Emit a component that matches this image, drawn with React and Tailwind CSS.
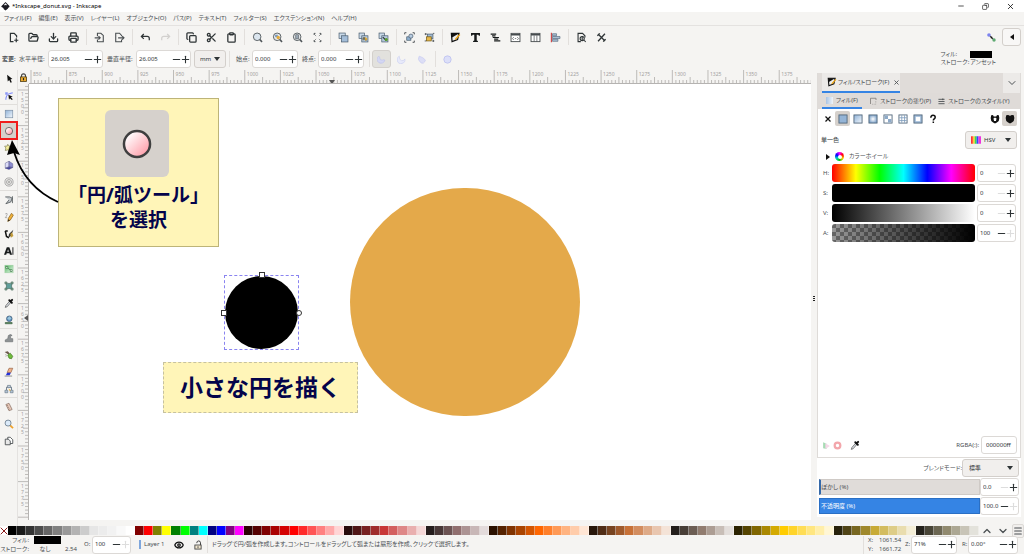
// src/App.jsx
import { useState } from "react";
import {
  ChevronDown,
  ChevronUp,
  Clipboard,
  Copy,
  Download,
  Eye,
  FolderOpen,
  Menu,
  Minus,
  Plus,
  Printer,
  Scissors,
  X,
} from "lucide-react";

const MENUS = [
  "ファイル(F)",
  "編集(E)",
  "表示(V)",
  "レイヤー(L)",
  "オブジェクト(O)",
  "パス(P)",
  "テキスト(T)",
  "フィルター(S)",
  "エクステンション(N)",
  "ヘルプ(H)",
];

const PALETTE = (
  "000000 1a1a1a 333333 4d4d4d 666666 808080 999999 b3b3b3 cccccc e6e6e6 ececec f2f2f2 f9f9f9 ffffff " +
  "800000 ff0000 808000 ffff00 008000 00ff00 008080 00ffff 000080 0000ff 800080 ff00ff " +
  "2b0000 550000 800000 aa0000 d40000 ff0000 ff2a2a ff5555 ff8080 ffaaaa ffd5d5 " +
  "280b0b 501616 782121 a02c2c c83737 d35f5f de8787 e9afaf f4d7d7 " +
  "241c1c 483737 6c5353 916f6f ac9393 c8b7b7 e3dbdb " +
  "2b1100 552200 803300 aa4400 d45500 ff6600 ff7f2a ff9955 ffb380 ffccaa ffe6d5 " +
  "28170b 502d16 784421 a05a2c c87137 d38d5f deaa87 e9c6af f4e3d7 " +
  "241f1c 483e37 6c5d53 917c6f ac9d93 c8beb7 e3dedb " +
  "2b2200 554400 806600 aa8800 d4aa00 ffcc00 ffd42a ffdd55 ffe680 ffeeaa fff6d5 " +
  "28220b 504416 786721 a0892c c8ab37 d3bc5f decd87 e9ddaf f4eed7 " +
  "24221c 484537 6c6753 918a6f aca793 c8c4b7 e3e2db"
).split(" ");

// 16x16 drawings, keyed by name
const GLYPHS = {
  newDoc: (
    <g fill="none" stroke="#2e3436" strokeWidth="1.8">
      <path d="M8 14H3.5V2H9l3.5 3.5V8M12 9v6M9 12h6" />
    </g>
  ),
  importDoc: (
    <g fill="none" stroke="#4a4f52" strokeWidth="1.6">
      <path d="M5 6V1.8h5L13.5 5v9.2H5V11M1 8.5h8M6.5 6L9 8.5 6.5 11" />
    </g>
  ),
  exportDoc: (
    <g fill="none" stroke="#4a4f52" strokeWidth="1.6">
      <path d="M11 6V5L8 1.8H2.5v12.4H11V11M6 8.5h8.5M12 6l2.5 2.5L12 11" />
    </g>
  ),
  undo: <path d="M5.5 3L2 6.5 5.5 10M2.5 6.5h8q3 0 3 3V12" fill="none" stroke="#2e3436" strokeWidth="1.8" />,
  redo: <path d="M10.5 3L14 6.5 10.5 10M13.5 6.5h-8q-3 0-3 3V12" fill="none" stroke="#d2d0ce" strokeWidth="1.8" />,
  zoomSel: (
    <g stroke="#50565a" strokeWidth="1.3">
      <circle cx="7.5" cy="7" r="5.5" fill="#dbe5ee" />
      <path d="M11.5 11l3 3.5" strokeWidth="2.4" />
    </g>
  ),
  zoomDraw: (
    <g stroke="#50565a" strokeWidth="1.3">
      <circle cx="7.5" cy="7" r="5.5" fill="#e6e8ea" />
      <rect x="4.5" y="4" width="4" height="3.5" fill="#7b9cc0" stroke="none" />
      <circle cx="9" cy="8" r="2.4" fill="#e2aa3c" stroke="none" />
      <path d="M11.5 11l3 3.5" strokeWidth="2.4" />
    </g>
  ),
  zoomPage: (
    <g stroke="#50565a" strokeWidth="1.3">
      <circle cx="7.5" cy="7" r="5.5" fill="#dfe3e6" />
      <rect x="5.5" y="4" width="4" height="6" fill="#9aa8b4" strokeWidth="0.8" />
      <path d="M11.5 11l3 3.5" strokeWidth="2.4" />
    </g>
  ),
  zoomCenter: (
    <g fill="none" stroke="#44494c" strokeWidth="1.4">
      <path d="M3 4V2h2M11 2h2v2M13 12v2h-2M5 14H3v-2" />
      <path d="M3 3l3 3M13 3l-3 3M3 13l3-3M13 13l-3-3" strokeWidth="0.8" />
    </g>
  ),
  duplicate: (
    <g stroke="#46596b">
      <rect x="1.5" y="1.5" width="9" height="8" fill="#c9d9e8" />
      <rect x="5" y="5.5" width="9.5" height="9" fill="#a3bdd8" />
    </g>
  ),
  clone: (
    <g stroke="#46596b">
      <rect x="1.5" y="1.5" width="8" height="8" fill="#c9d9e8" />
      <rect x="5.5" y="5.5" width="9" height="9" fill="#b5c9de" />
      <path d="M7.5 12V8.5H10v3h3" fill="none" stroke="#554b21" strokeWidth="1.4" />
      <path d="M10.5 7l3.5 3-3.5 3z" fill="#e6ac2f" stroke="none" />
    </g>
  ),
  unlink: (
    <g stroke="#46596b">
      <rect x="1.5" y="1.5" width="8" height="8" fill="#c9d9e8" />
      <rect x="5.5" y="5.5" width="9" height="9" fill="#b5c9de" />
      <path d="M7 7.5l5 5" stroke="#2e3436" strokeWidth="1.8" />
      <circle cx="12" cy="11" r="2.2" fill="#5aa02c" stroke="none" />
    </g>
  ),
  group: (
    <g>
      <rect x="4" y="7" width="6" height="5" fill="#8fb0d0" stroke="#46596b" />
      <circle cx="10" cy="6" r="3" fill="#b8cbe0" stroke="#46596b" />
      <path d="M1 3.5V1h2.5M12.5 1H15v2.5M15 12.5V15h-2.5M3.5 15H1v-2.5" fill="none" stroke="#44494c" strokeWidth="1.3" />
    </g>
  ),
  ungroup: (
    <g>
      <rect x="5" y="3" width="8" height="7" fill="#9fb8d2" stroke="#46596b" />
      <rect x="3.5" y="7" width="7" height="6" fill="#e8b84b" stroke="#6d5410" />
      <path d="M1 3h3M2.5 1.5v3M12 13h3M13.5 11.5v3M13 2h2M1 13h2" stroke="#44494c" strokeWidth="1.2" />
    </g>
  ),
  fillStroke: (
    <g>
      <path d="M2 2h11l-2 9-8 3z" fill="#eeeeec" stroke="#111" strokeWidth="1.8" />
      <path d="M2 2h11L3 8z" fill="#111" />
      <path d="M13.5 3L15 4.5 9 11l-2 .5.500-2z" fill="#f0a818" />
    </g>
  ),
  text: <path d="M1.5 1.5h13v4H13L12 4H9.8v8.5l1.7.5v1.5h-7V13l1.7-.5V4H4L3 5.5H1.5z" fill="#171a1b" />,
  layers: <path d="M1 3h8M4 8h9M6 13h9M3 5.5h5M6 10.5h6" stroke="#171a1b" strokeWidth="1.8" />,
  xml: (
    <g fill="none" stroke="#464b4e" strokeWidth="1.3">
      <rect x="1.5" y="2" width="13" height="12" fill="#fff" />
      <path d="M1.5 4h13" strokeWidth="2.2" />
      <path d="M5.5 7.5l-2 2 2 2M10.5 7.5l2 2-2 2M7 9.5h2" strokeWidth="1" />
    </g>
  ),
  objects: (
    <g fill="none" stroke="#464b4e" strokeWidth="1.3">
      <rect x="1.5" y="2" width="13" height="12" fill="#fff" />
      <path d="M1.5 4h13" strokeWidth="2.2" />
      <path d="M6 5v9M10 5v9" strokeWidth="1" />
    </g>
  ),
  align: (
    <g>
      <path d="M2 1v14" stroke="#d23b3b" strokeWidth="1.6" />
      <path d="M3.5 2.5h6v3h-6zM3.5 6.5h11v3h-11zM3.5 10.5h8v3h-8z" fill="#a9bfd4" stroke="#5a6e82" />
    </g>
  ),
  docProps: (
    <g fill="none" stroke="#2e3436" strokeWidth="1.6">
      <path d="M7 14H3V2h6.5L13 5.5V8" />
      <circle cx="9" cy="9.5" r="3" />
      <path d="M9 6v7M12 12l2 2.5" />
    </g>
  ),
  prefs: (
    <g stroke="#2e3436" strokeWidth="1.9" fill="none">
      <path d="M3 3l10 10M13 2.5L3 13.5M2 5.5L5.5 2M10.5 14l3.5-3.5" />
    </g>
  ),
  select: <path d="M5 1l1 11 2.300-2.500L10.500 14l2-1-2-4.500 3-.5z" fill="#111" />,
  node: (
    <g>
      <path d="M3 14C3 7 6 4 14 3" fill="none" stroke="#5b6bff" strokeWidth="1.4" />
      <rect x="2" y="2" width="4" height="4" fill="#8a96f5" />
      <path d="M7 6l7 3-3 1 3 3-1.500 1.500-3-3L8 14z" fill="#111" />
    </g>
  ),
  rect: <rect x="2" y="2" width="12" height="12" fill="url(#blue)" stroke="#7589a0" />,
  ellipse: <circle cx="8" cy="8" r="5.8" fill="url(#pink)" stroke="#3f3f3f" strokeWidth="1.1" />,
  star: (
    <g stroke="#77754a">
      <path d="M6 2l2 3h4l-2 4 1 4-5-2-4 1 1-4-2-3h4z" fill="#f5ee9b" />
      <path d="M9 5l5 2-1 6-6 1z" fill="#d8d27a" />
    </g>
  ),
  box: (
    <g stroke="#5c5c8a" strokeWidth="0.8">
      <path d="M2 5l6-3v9l-6 2z" fill="#dcdcf8" />
      <path d="M8 2l6 4v6l-6-1z" fill="#8b8bd0" />
      <path d="M2 13l6-2 6 1-6 3z" fill="#4343a0" />
    </g>
  ),
  spiral: (
    <g fill="none" stroke="#7c7c7c">
      <circle cx="8" cy="8" r="6.5" />
      <circle cx="8" cy="8" r="4" />
      <circle cx="8" cy="8" r="1.5" />
    </g>
  ),
  pen: (
    <g fill="none" stroke="#4e5457" strokeWidth="1.3">
      <path d="M2 3h7l4 2-2 6-8 3 5-6" fill="#c4c9cc" />
      <path d="M13.5 2v11" />
    </g>
  ),
  pencil: (
    <g>
      <path d="M2 3q4-2 3 1t-3 5h3" fill="none" stroke="#888" />
      <path d="M12 2l3 3-5 8-4 2 1-5z" fill="#f0b23c" stroke="#7a5410" />
      <path d="M6 15l1-3.5L9.5 13z" fill="#222" />
    </g>
  ),
  calligraphy: (
    <g>
      <path d="M2 3l2 9 4 2M2 3h4" fill="none" stroke="#111" strokeWidth="2.4" />
      <path d="M15 1l-4 10-4 3 1-6z" fill="#333" />
      <path d="M10 8l3-3 2 6-4 3z" fill="#c09a3a" />
    </g>
  ),
  textTool: (
    <path fillRule="evenodd" d="M0 14L4.5 2h4L13 14H9.5l-.8-2.5H4.3L3.5 14zM5.2 9h2.600L6.5 5zM13.5 2H15v12h-1.5z" fill="#171a1b" />
  ),
  gradient: (
    <g>
      <rect x="1.5" y="2" width="13" height="12" fill="url(#green)" stroke="#9ccfa0" />
      <path d="M4 5l8 6" stroke="#2d6e38" />
      <path d="M3 4h3v3H3zM10 9h3v3h-3z" fill="#fff" stroke="#2d6e38" />
    </g>
  ),
  mesh: (
    <g stroke="#44665a">
      <path d="M3 3q5 2 10 0-2 5 0 10-5-2-10 0 2-5 0-10z" fill="#5f9e9a" />
      <path d="M1.5 1.5h3v3h-3zM11.5 1.5h3v3h-3zM1.5 11.5h3v3h-3zM11.5 11.5h3v3h-3z" fill="#9ab8a0" />
    </g>
  ),
  dropper: (
    <g>
      <path d="M2 15l1-3 6-7 2 2-6 7z" fill="#d8dde2" stroke="#444" />
      <path d="M8.5 3.5l4 4M11 5l2-2" stroke="#111" strokeWidth="3.2" strokeLinecap="round" />
    </g>
  ),
  bucket: (
    <g>
      <circle cx="8.5" cy="6" r="4.5" fill="#5d8fc0" stroke="#3a5266" />
      <path d="M5 5l4-3 3 4-4 2z" fill="#9cc7dd" />
      <path d="M2 12h11v2H2z" fill="#4f8b57" stroke="#385a3d" />
    </g>
  ),
  tweak: <path d="M2 14v-3l4-2 1-5q4-3 6 0l-3 1 1 4h3v5z" fill="#8e9294" stroke="#6a6e70" />,
  spray: (
    <g>
      <path d="M1 3l5-1 3 3-2 2z" fill="#6b5a4c" />
      <path d="M6 8l4-3 4 5-2 4-4-1z" fill="#6fbb3d" stroke="#3b6f1c" />
      <path d="M2 7l2 1M2 10l3-1" stroke="#999" />
    </g>
  ),
  eraser: (
    <g>
      <path d="M8 2h6l-3 7H5z" fill="#efb08a" stroke="#8d5a3a" />
      <path d="M5 9h6l-2 4H3z" fill="#2633d9" />
      <path d="M1 14.5h12" stroke="#555" />
    </g>
  ),
  connector: (
    <g stroke="#657585">
      <path d="M4 10V5h8v5" fill="none" strokeWidth="1.4" />
      <rect x="6" y="2" width="4" height="4" fill="#c8d4df" />
      <path d="M1.5 10H6v4H1.5zM10 10h4.500v4H10z" fill="#b3c4d4" />
      <path d="M7 7l4 3-2 1z" fill="#e6ac2f" stroke="none" />
    </g>
  ),
  measure: (
    <g>
      <path d="M3 4l5-2 5 10-5 2z" fill="#e8c8b8" stroke="#7b6256" />
      <path d="M4.5 6l2-1M6 9l2-1M7 12l2-1" stroke="#7b6256" />
    </g>
  ),
  zoom: (
    <g>
      <path d="M9.5 10l5 4.5" stroke="#eea22d" strokeWidth="2.8" />
      <circle cx="6.5" cy="6.5" r="4.8" fill="#dcebfa" stroke="#6d7f90" strokeWidth="1.4" />
    </g>
  ),
  pages: (
    <g fill="#fff" stroke="#3d4245" strokeWidth="1.3">
      <path d="M6 2h4l4 4v6H6z" />
      <path d="M2 5h5l3 3v6H2z" fill="#e8e8e8" />
    </g>
  ),
  lock: (
    <g>
      <path d="M4.5 7V5a3.5 3.5 0 017 0v2" fill="none" stroke="#444" strokeWidth="2" />
      <rect x="2.5" y="7" width="11" height="8" fill="#eaa92d" stroke="#4a3a12" strokeWidth="1.4" />
      <path d="M8 9v4" stroke="#222" strokeWidth="2" />
    </g>
  ),
  unlock: (
    <g>
      <path d="M6 5q0-3.5 3-3.5t3 3V8" fill="none" stroke="#444" strokeWidth="1.6" />
      <rect x="3" y="8" width="10" height="6.5" fill="#efe5cd" stroke="#444" strokeWidth="1.4" />
      <path d="M8 10v3" stroke="#444" strokeWidth="1.4" />
    </g>
  ),
  snap: (
    <g>
      <path d="M4 4l9 9" stroke="#222" strokeWidth="1.8" />
      <circle cx="3.5" cy="3.5" r="3.2" fill="#7c83ee" />
      <circle cx="12.5" cy="12.5" r="3" fill="#5faa72" />
      <circle cx="8" cy="8" r="1.6" fill="#111" />
    </g>
  ),
  slice: <path d="M3 2a7 7 0 1011 7q-2-1-4 0-5 1-5-3 0-3-2-4z" fill="#d4d7f3" stroke="#b9beec" />,
  arc: <path d="M4 2a7 7 0 1010 5q-2 4-6 3T4 2z" fill="#e8eafa" stroke="#c6cbf0" />,
  chord: <path d="M4 2q-4 6 2 11t9-4Q11 4 4 2z" fill="#dcdef6" stroke="#c0c5ef" />,
  whole: <circle cx="8" cy="8" r="6.5" fill="#dcdff8" stroke="#bfc4ef" strokeWidth="1.6" />,
  paintNone: <path d="M4 4l8 8M12 4l-8 8" stroke="#111" strokeWidth="2" />,
  paintFlat: <rect x="1.5" y="1.5" width="13" height="13" fill="#94b4d6" stroke="#4f6478" strokeWidth="1.4" />,
  paintLinear: <rect x="1.5" y="1.5" width="13" height="13" fill="url(#blue)" stroke="#4f6478" strokeWidth="1.4" />,
  paintRadial: <rect x="1.5" y="1.5" width="13" height="13" fill="url(#radial)" stroke="#4f6478" strokeWidth="1.4" />,
  paintMesh: (
    <g>
      <rect x="1.5" y="1.5" width="13" height="13" fill="#fff" stroke="#4f6478" strokeWidth="1.4" />
      <path d="M2.5 2.5H8V8H2.5zM8 8h5.5v5.5H8z" fill="#8eaac8" />
    </g>
  ),
  paintPattern: (
    <g>
      <rect x="1.5" y="1.5" width="13" height="13" fill="#fff" stroke="#4f6478" strokeWidth="1.4" />
      <path d="M6 2v12M10.5 2v12M2 6h12M2 10.5h12" stroke="#7c9bbb" strokeWidth="1.3" />
    </g>
  ),
  paintSwatch: (
    <g>
      <rect x="1.5" y="1.5" width="13" height="13" fill="#9fbbd8" stroke="#4f6478" strokeWidth="1.4" />
      <rect x="4.5" y="4.5" width="7" height="7" fill="#fff" />
    </g>
  ),
  paintUnset: <path d="M4.5 6q0-4 3.500-4t3.500 3.300c0 2.700-3 2.500-3 5M8.500 12v2.500" fill="none" stroke="#111" strokeWidth="2.4" />,
  evenOdd: (
    <path
      fillRule="evenodd"
      d="M2 2q3-1 4 2h4q1-3 4-2 2 5 0 9-3 3-6 4-3-1-6-4-2-4 0-9zM8 5.500L5.500 7l1 4h3l1-4z"
      fill="#111"
    />
  ),
  nonZero: <path d="M2 2q4-1 6 1 2-2 6-1 2 5 0 9-3 3-6 4-3-1-6-4-2-4 0-9z" fill="#111" />,
  strokePaint: (
    <g fill="none" stroke="#7d7a77" strokeWidth="1.6">
      <path d="M3 14V2.5h11V6" />
      <path d="M13.5 8v6.5H6" strokeDasharray="1.5 1.5" strokeWidth="1" />
    </g>
  ),
  strokeStyle: <path d="M1 3h14M1 8h14M1 13h14M11 1v4" stroke="#3a3f42" strokeWidth="1.8" />,
  managed: (
    <g>
      <path d="M2 2l6 3v9l-6-1z" fill="#a6dbb4" />
      <path d="M6 4l8 5-8 5z" fill="#f5d6e8" />
    </g>
  ),
  gamut: <circle cx="8" cy="8" r="5" fill="#fff" stroke="#f3a6ab" strokeWidth="4" />,
  hsv: (
    <g>
      <path d="M0 2h3v12H0z" fill="#f33" />
      <path d="M3 2h3v12H3z" fill="#fc3" />
      <path d="M6 2h3v12H6z" fill="#3d5" />
      <path d="M9 2h3v12H9z" fill="#34f" />
      <path d="M12 2h4v12h-4z" fill="#e3d" />
    </g>
  ),
  logo: (
    <g fill="#1a1a22">
      <path d="M8 0l7 7q1 2-2 3l-1 2-4 3-4-3 1-1-4-2q-1-1 0-2z" />
      <path d="M8 2l2.500 3L9 6 8 5 6.500 6l-1-1z" fill="#fff" />
    </g>
  ),
};

const MAIN_TOOLS = [
  [["新規", "newDoc"], ["開く", FolderOpen], ["保存", Download], ["印刷", Printer]],
  [["インポート", "importDoc"], ["エクスポート", "exportDoc"]],
  [["元に戻す", "undo"], ["やり直し", "redo"]],
  [["コピー", Copy], ["切り取り", Scissors], ["貼り付け", Clipboard]],
  [["選択ズーム", "zoomSel"], ["描画ズーム", "zoomDraw"], ["ページズーム", "zoomPage"], ["中央", "zoomCenter"]],
  [["複製", "duplicate"], ["クローン", "clone"], ["リンク解除", "unlink"]],
  [["グループ化", "group"], ["グループ解除", "ungroup"]],
  [
    ["フィル/ストローク", "fillStroke"],
    ["テキスト", "text"],
    ["レイヤー", "layers"],
    ["XMLエディター", "xml"],
    ["オブジェクト", "objects"],
    ["整列", "align"],
  ],
  [["ドキュメント", "docProps"], ["設定", "prefs"]],
];

const TOOLBOX = [
  ["select", "node"],
  ["rect", "ellipse", "star", "box", "spiral"],
  ["pen", "pencil", "calligraphy", "textTool"],
  ["gradient", "mesh", "dropper", "bucket"],
  ["tweak", "spray", "eraser", "connector"],
  ["measure", "zoom", "pages"],
];

const PAINTS = ["paintNone", "paintFlat", "paintLinear", "paintRadial", "paintMesh", "paintPattern", "paintSwatch", "paintUnset"];

const CHANNELS = [
  { name: "H", value: "0", track: "bg-[linear-gradient(to_right,#f00,#ff0,#0f0,#0ff,#00f,#f0f,#f00)]" },
  { name: "S", value: "0", track: "bg-black" },
  { name: "V", value: "0", track: "bg-[linear-gradient(to_right,#000,#fff)]" },
  {
    name: "A",
    value: "100",
    track:
      "bg-[linear-gradient(to_right,transparent,#000),repeating-conic-gradient(#999_0_25%,#666_0_50%)] bg-[length:100%_100%,8px_8px]",
  },
];

function Glyph({ name, className = "size-3" }) {
  return (
    <svg viewBox="0 0 16 16" className={`shrink-0 ${className}`} aria-hidden="true">
      {GLYPHS[name]}
    </svg>
  );
}

// Shared gradients for the glyphs
function GlyphDefs() {
  return (
    <svg className="absolute size-0" aria-hidden="true">
      <defs>
        <linearGradient id="blue" x1="0" y1="0" x2="1" y2="1">
          <stop offset="0" stopColor="#8fb2d8" />
          <stop offset="1" stopColor="#f4f8fc" />
        </linearGradient>
        <linearGradient id="pink" x1="0" y1="0" x2="1" y2="1">
          <stop offset="0.15" stopColor="#fff" />
          <stop offset="0.9" stopColor="#ff9aa6" />
        </linearGradient>
        <linearGradient id="green" x1="0" y1="0" x2="1" y2="1">
          <stop offset="0" stopColor="#4bb35a" />
          <stop offset="1" stopColor="#f0faf0" />
        </linearGradient>
        <radialGradient id="radial">
          <stop offset="0" stopColor="#fff" />
          <stop offset="1" stopColor="#86a8cc" />
        </radialGradient>
      </defs>
    </svg>
  );
}

function Separator() {
  return <div className="mr-[2px] ml-[3px] h-4 w-px shrink-0 bg-[#e2dfdc]" />;
}

function SpinBox({ id, label, value, className = "", minusOff, plusOff }) {
  const [text, setText] = useState(value);

  return (
    <div className={`flex h-[18px] shrink-0 items-center rounded-[3px] border border-[#dcd9d6] bg-white ${className}`}>
      <input
        id={id}
        aria-label={label}
        value={text}
        onChange={(e) => setText(e.target.value)}
        className="w-0 min-w-0 flex-1 bg-transparent pl-[2px] text-[#2e3436] outline-none"
      />
      <button type="button" aria-label={`${id} -`} className="flex h-full w-[9px] items-center justify-center">
        <Minus className={`size-[11px] shrink-0 ${minusOff ? "text-[#dddddd]" : "text-[#2e3436]"}`} strokeWidth={2.4} />
      </button>
      <button type="button" aria-label={`${id} +`} className="flex h-full w-[9px] items-center justify-center">
        <Plus className={`size-[11px] shrink-0 ${plusOff ? "text-[#dddddd]" : "text-[#2e3436]"}`} strokeWidth={2.4} />
      </button>
    </div>
  );
}

function Dropdown({ id, label, value, icon, className = "", pad = "pl-2" }) {
  return (
    <div className={`relative h-[18px] shrink-0 rounded-[3px] border border-[#d3cfcb] bg-[#f1efed] ${className}`}>
      <select id={id} aria-label={label} defaultValue={value} className={`h-full w-full appearance-none bg-transparent text-[#2e3436] outline-none ${pad}`}>
        <option>{value}</option>
      </select>
      {icon && <Glyph name={icon} className="pointer-events-none absolute top-[3px] left-[5px] size-[10px]" />}
      <svg viewBox="0 0 6 4" className="pointer-events-none absolute top-[6px] right-[5px] h-1 w-[6px]">
        <path d="M0 0h6L3 4z" fill="#2e3436" />
      </svg>
    </div>
  );
}

function HorizontalRuler() {
  const step = 35.63;
  const ticks = [];
  for (let i = 0; i < 220; i++) {
    const x = 2 + (i * step) / 10;
    const top = i % 10 === 0 ? 0 : i % 5 === 0 ? 7 : 10;
    ticks.push(<path key={i} d={`M${x} ${top}V14`} />);
  }
  return (
    <svg className="h-[14px] w-0 flex-1 border-b border-[#b5b3b1]" aria-hidden="true">
      <g stroke="#aeacaa" strokeWidth="0.8">{ticks}</g>
      <g fill="#a3a19f" fontSize="5">
        {Array.from({ length: 22 }, (_, i) => (
          <text key={i} x={4 + i * step} y="6">{850 + i * 25}</text>
        ))}
      </g>
      <path d="M300 10h6l-3 4z" fill="#555" />
    </svg>
  );
}

function VerticalRuler() {
  const step = 35.6;
  const ticks = [];
  for (let i = -1; i < 130; i++) {
    const y = 6 + (i * step) / 10;
    const left = i % 10 === 0 ? 0 : i % 5 === 0 ? 5 : 7;
    ticks.push(<path key={i} d={`M${left} ${y}H10`} />);
  }
  return (
    <svg className="h-full w-[11px] shrink-0 border-r border-[#b5b3b1]" aria-hidden="true">
      <g stroke="#aeacaa" strokeWidth="0.8">{ticks}</g>
      <g fill="#a3a19f" fontSize="5">
        {Array.from({ length: 12 }, (_, i) =>
          String(1500 + i * 25)
            .split("")
            .map((digit, n) => (
              <text key={`${i}-${n}`} x="3" y={12 + i * step + n * 6}>{digit}</text>
            ))
        )}
      </g>
      <path d="M6 234l4-3v6z" fill="#555" />
    </svg>
  );
}

function Canvas() {
  return (
    <main className="relative w-0 flex-1 overflow-hidden bg-white [font-feature-settings:normal]">
      {/* Step 1 note */}
      <div className="absolute top-[14px] left-[29px] flex h-[149px] w-[161px] flex-col items-center border border-[#bdb478] bg-[#fff5b8] pt-[11px]">
        <div className="mr-[3px] flex h-[67px] w-16 shrink-0 items-center justify-center rounded-md bg-[#d6d1cc]">
          <Glyph name="ellipse" className="size-9" />
        </div>
        <p className="mt-[6px] text-center text-[19px] leading-[25px] font-bold whitespace-nowrap text-[#04044b]">
          「円/弧ツール」
          <br />
          を選択
        </p>
      </div>

      {/* Drawn shapes */}
      <div className="absolute top-[104px] left-[321px] h-[228px] w-[230px] rounded-full bg-[#e4a94a]" />
      <div className="absolute top-[191px] left-[195px] size-[75px] border border-dashed border-[#8a84f0]">
        <div className="size-full rounded-full bg-black" />
        <span className="absolute -top-[4px] left-[34px] size-[6px] border border-[#333] bg-white" />
        <span className="absolute top-[34px] -left-[4px] size-[6px] border border-[#333] bg-white" />
        <span className="absolute top-[34px] -right-[4px] size-[6px] rounded-full border border-[#333] bg-white" />
      </div>

      {/* Step 2 note */}
      <p className="absolute top-[278px] left-[134px] flex h-[51px] w-[195px] items-center justify-center border border-dashed border-[#c6c1a0] bg-[#fff5b8] text-[23px] font-bold whitespace-nowrap text-[#04044b]">
        小さな円を描く
      </p>
    </main>
  );
}

function FillStrokePanel() {
  return (
    <aside className="mt-[3px] mr-[3px] flex w-[204px] shrink-0 flex-col bg-white">
      <div className="flex flex-1 flex-col border border-t-0 border-[#dedbd8]">
        {/* Dialog tab */}
        <div className="flex h-5 shrink-0 items-stretch bg-[#e0dcd9] pl-1">
          <div className="flex w-[78px] items-center border-b-2 border-[#3584e4] bg-[#eceae8] pl-[5px] whitespace-nowrap">
            <Glyph name="fillStroke" className="mr-px size-[10px]" />
            フィル/ストローク(F)
            <button type="button" aria-label="閉じる" className="ml-1">
              <X className="size-[7px]" strokeWidth={3} />
            </button>
          </div>
          <button type="button" aria-label="ダイアログメニュー" className="ml-auto flex w-[17px] items-center justify-center bg-[#eceae8]">
            <ChevronDown className="size-3" />
          </button>
        </div>

        {/* Page tabs */}
        <div role="tablist" className="flex h-4 shrink-0 items-stretch bg-[#dfdbd8] pl-1 whitespace-nowrap">
          <button type="button" role="tab" aria-selected="true" className="flex w-10 items-center gap-[3px] border-b-2 border-[#3584e4] pl-1">
            <span className="size-[7px] bg-linear-to-r from-[#a9c4e4] to-[#f0f4f8]" />
            フィル(F)
          </button>
          <button type="button" role="tab" className="ml-[7px] flex w-[63px] items-center gap-[3px]">
            <Glyph name="strokePaint" className="size-2" />
            ストロークの塗り(P)
          </button>
          <button type="button" role="tab" className="ml-[6px] flex items-center gap-[3px]">
            <Glyph name="strokeStyle" className="size-[7px]" />
            ストロークのスタイル(Y)
          </button>
        </div>

        {/* Paint type */}
        <div className="flex h-[19px] shrink-0 items-center pr-[3px] pl-[2px]">
          {PAINTS.map((name) => (
            <button
              key={name}
              type="button"
              aria-label={name}
              className={`flex size-[15px] items-center justify-center rounded-[2px] ${name === "paintFlat" ? "bg-[#d6d1cc]" : ""}`}
            >
              <Glyph name={name} className="size-[10px]" />
            </button>
          ))}
          <button type="button" aria-label="evenodd" className="ml-auto flex size-[15px] items-center justify-center">
            <Glyph name="evenOdd" className="size-[10px]" />
          </button>
          <button type="button" aria-label="nonzero" className="flex size-[15px] items-center justify-center rounded-[2px] bg-[#d6d1cc]">
            <Glyph name="nonZero" className="size-[10px]" />
          </button>
        </div>

        <div className="mt-[2px] flex h-5 shrink-0 items-center justify-between pr-[3px] pl-[3px]">
          <span className="font-medium">単一色</span>
          <Dropdown id="color-mode" label="カラーモード" value="HSV" icon="hsv" className="w-[52px]" pad="pl-[18px]" />
        </div>

        <button type="button" className="flex h-[13px] shrink-0 items-center gap-[5px] pl-2">
          <svg viewBox="0 0 4 6" className="h-[6px] w-1">
            <path d="M0 0l4 3-4 3z" fill="#111" />
          </svg>
          <span className="flex size-[9px] items-center justify-center rounded-full bg-[conic-gradient(#f0f,#f00,#fc0,#0c0,#0cc,#00f,#f0f)]">
            <span className="size-1 rounded-full bg-white" />
          </span>
          カラーホイール
        </button>

        {/* Channels */}
        <div className="mt-px flex shrink-0 flex-col gap-[2px] pr-1 pl-[5px]">
          {CHANNELS.map(({ name, value, track }) => (
            <div key={name} className="flex items-center">
              <label htmlFor={`channel-${name}`} className="w-[9px]">{name}:</label>
              <input
                type="range"
                aria-label={`${name} スライダー`}
                defaultValue={value}
                className={`h-[18px] w-0 flex-1 appearance-none rounded-[3px] [&::-webkit-slider-thumb]:appearance-none ${track}`}
              />
              <SpinBox id={`channel-${name}`} value={value} minusOff={value === "0"} plusOff={value === "100"} className="ml-[2px] w-[39px]" />
            </div>
          ))}
        </div>

        <div className="mt-auto flex h-6 shrink-0 items-center pr-[3px] pl-1">
          <Glyph name="managed" className="size-[9px]" />
          <Glyph name="gamut" className="ml-[2px] size-[9px]" />
          <button type="button" aria-label="色の抽出" className="ml-2">
            <Glyph name="dropper" className="block size-[10px]" />
          </button>
          <label htmlFor="rgba" className="mr-[2px] ml-auto">RGBA(:):</label>
          <input
            id="rgba"
            defaultValue="000000ff"
            className="h-[18px] w-9 rounded-[3px] border border-[#dcd9d6] bg-white px-1 text-[#2e3436] outline-none"
          />
        </div>
      </div>

      <div className="flex shrink-0 flex-col gap-px px-[2px] pt-px pb-[2px]">
        <div className="flex items-center justify-end">
          <label htmlFor="blend">ブレンドモード:</label>
          <Dropdown id="blend" value="標準" className="w-[57px]" pad="pl-[6px]" />
        </div>
        <div className="flex items-center">
          <div className="relative h-4 flex-1 border border-l-2 border-[#cfcac6] border-l-[#3569a8] bg-[#e0dcd9]">
            <input id="blur" type="range" defaultValue="0" className="block h-full w-full appearance-none bg-transparent [&::-webkit-slider-thumb]:appearance-none" />
            <label htmlFor="blur" className="absolute top-[3px] left-0">ぼかし (%)</label>
          </div>
          <SpinBox id="blur-value" label="ぼかし" value="0.0" minusOff className="w-[39px]" />
        </div>
        <div className="flex items-center">
          <div className="relative h-4 flex-1 border border-[#2a6fc4] bg-[#3584e4]">
            <input id="opacity" type="range" defaultValue="100" className="block h-full w-full appearance-none bg-transparent [&::-webkit-slider-thumb]:appearance-none" />
            <label htmlFor="opacity" className="absolute top-[3px] left-px text-white">不透明度 (%)</label>
          </div>
          <SpinBox id="opacity-value" label="不透明度" value="100.0" plusOff className="w-[39px]" />
        </div>
      </div>
    </aside>
  );
}

export default function App() {
  const [tool, setTool] = useState("ellipse");

  return (
    <div className="relative flex h-screen flex-col overflow-hidden bg-[#f5f4f2] font-['Noto_Sans','Noto_Sans_CJK_JP',sans-serif] text-[6px] leading-[9px] text-[#4a4f52] [font-feature-settings:'palt']">
      <GlyphDefs />

      {/* Title bar */}
      <header className="flex h-3 shrink-0 items-center bg-white pl-px text-black">
        <Glyph name="logo" className="mr-[2px] size-[9px]" />
        <h1>*Inkscape_donut.svg - Inkscape</h1>
        <div className="ml-auto flex items-center gap-[17px] pr-[9px]">
          <button type="button" aria-label="最小化"><Minus className="size-2" /></button>
          <button type="button" aria-label="元のサイズ"><Copy className="size-[7px] -scale-x-100" /></button>
          <button type="button" aria-label="閉じる"><X className="size-[9px]" /></button>
        </div>
      </header>

      {/* Menu */}
      <nav className="flex h-[14px] shrink-0 items-center gap-[7px] border-b border-[#e4e2e0] pl-1 whitespace-nowrap">
        {MENUS.map((menu) => (
          <button key={menu} type="button">{menu}</button>
        ))}
      </nav>

      {/* Commands */}
      <div className="flex h-[22px] shrink-0 items-center pr-[3px] pl-[3px]">
        {MAIN_TOOLS.map((tools, i) => (
          <div key={i} className="flex items-center">
            {i > 0 && <Separator />}
            {tools.map(([label, icon]) => {
              const Icon = icon;
              return (
                <button key={label} type="button" aria-label={label} className="flex size-5 items-center justify-center">
                  {typeof icon === "string" ? (
                    <Glyph name={icon} className="size-[11px]" />
                  ) : (
                    <Icon className="size-[11px] text-[#2e3436]" strokeWidth={2.8} />
                  )}
                </button>
              );
            })}
          </div>
        ))}
        <button type="button" aria-label="スナップ" className="mr-[6px] ml-auto">
          <Glyph name="snap" className="block size-[9px]" />
        </button>
        <button type="button" aria-label="スナップ設定" className="flex h-[18px] w-[19px] items-center justify-center rounded-[3px] border border-[#d3cfcb] bg-[#f8f7f6]">
          <svg viewBox="0 0 4 6" className="h-[6px] w-1">
            <path d="M4 0L0 3l4 3z" fill="#111" />
          </svg>
        </button>
      </div>

      {/* Tool controls */}
      <div className="flex h-[22px] shrink-0 items-center pl-[2px] whitespace-nowrap">
        <span className="w-[17px] font-semibold">変更:</span>
        <label htmlFor="rx" className="w-[29px]">水平半径:</label>
        <SpinBox id="rx" value="26.005" className="w-[55px]" />
        <label htmlFor="ry" className="ml-1 w-[29px]">垂直半径:</label>
        <SpinBox id="ry" value="26.005" className="w-[55px]" />
        <Dropdown id="unit" label="単位" value="mm" className="ml-[3px] w-8" pad="pl-[5px]" />
        <Separator />
        <label htmlFor="start" className="ml-1 w-4">始点:</label>
        <SpinBox id="start" value="0.000" className="w-[46px]" />
        <label htmlFor="end" className="ml-1 w-4">終点:</label>
        <SpinBox id="end" value="0.000" className="w-[46px]" />
        <div className="ml-[2px] flex items-center">
          <Separator />
          {["slice", "arc", "chord"].map((name) => (
            <button
              key={name}
              type="button"
              aria-label={name}
              className={`mr-px flex h-[18px] w-[19px] items-center justify-center rounded-[3px] border ${
                name === "slice" ? "border-[#d3d0cc] bg-[#e2e1dd]" : "border-transparent"
              }`}
            >
              <Glyph name={name} className="size-[9px]" />
            </button>
          ))}
          <Separator />
          <button type="button" aria-label="円全体" className="flex w-[19px] justify-center">
            <Glyph name="whole" className="size-[9px]" />
          </button>
        </div>
        <div className="mr-[28px] mb-[2px] ml-auto grid grid-cols-[auto_auto] items-center gap-x-px leading-2">
          <span>フィル:</span>
          <span className="h-[7px] w-[22px] bg-black" />
          <span>ストローク:</span>
          <span>アンセット</span>
        </div>
      </div>

      {/* Workspace */}
      <div className="relative flex min-h-0 flex-1">
        <div className="flex w-[18px] shrink-0 flex-col border-r border-[#e4e2e0]">
          {TOOLBOX.map((group, i) => (
            <div key={i} className={i > 0 ? "border-t border-[#e0dedb]" : ""}>
              {group.map((name) => (
                <button
                  key={name}
                  type="button"
                  aria-label={name}
                  aria-pressed={tool === name}
                  onClick={() => setTool(name)}
                  className={`flex h-[17px] w-full items-center justify-center ${
                    tool === name ? "bg-[#d6d1cc] outline-2 -outline-offset-1 outline-[#f01c1c]" : ""
                  }`}
                >
                  <Glyph name={name} className="size-[10px]" />
                </button>
              ))}
            </div>
          ))}
        </div>

        <div className="mb-[6px] flex flex-1 flex-col">
          <div className="flex shrink-0">
            <button type="button" aria-label="ガイドをロック" className="flex w-[11px] items-center justify-center">
              <Glyph name="lock" className="size-[9px]" />
            </button>
            <HorizontalRuler />
          </div>
          <div className="flex min-h-0 flex-1">
            <VerticalRuler />
            <Canvas />
          </div>
        </div>

        {/* Pane handle */}
        <div className="flex w-[6px] shrink-0 flex-col items-center justify-center gap-px">
          <span className="h-px w-[2px] bg-[#222]" />
          <span className="h-px w-[2px] bg-[#222]" />
          <span className="h-px w-[2px] bg-[#222]" />
        </div>

        <div className="mb-[9px] flex">
          <FillStrokePanel />
        </div>

        {/* Arrow from the note to the ellipse tool */}
        <svg className="pointer-events-none absolute top-[70px] left-0 h-[70px] w-[60px]" aria-hidden="true">
          <path d="M58 62Q25 47 14 12" fill="none" stroke="#000" strokeWidth="1.8" />
          <path d="M12 0l8 15-6-2-7 2z" fill="#000" />
        </svg>
      </div>

      {/* Palette */}
      <div className="flex h-[9px] shrink-0 items-center">
        <div className="flex h-full flex-1">
          <button type="button" aria-label="なし" className="flex min-w-0 flex-1 items-center justify-center bg-white">
            <X className="size-3 shrink-0 text-[#8c1c1c]" />
          </button>
          {PALETTE.map((hex, i) => (
            <button
              key={i}
              type="button"
              aria-label={`#${hex}`}
              className="flex-1 border-r border-white/40"
              style={{ backgroundColor: `#${hex}` }}
            />
          ))}
        </div>
        <div className="flex w-[45px] shrink-0 items-center justify-between pl-[2px]">
          <button type="button" aria-label="上へ"><ChevronUp className="size-3" strokeWidth={2.5} /></button>
          <button type="button" aria-label="下へ"><ChevronDown className="size-3" strokeWidth={2.5} /></button>
          <button type="button" aria-label="パレット設定" className="rounded-[2px] border border-[#dcd9d6] bg-[#f1efed]">
            <Menu className="h-3 w-[10px]" strokeWidth={2.5} />
          </button>
        </div>
      </div>

      {/* Status bar */}
      <footer className="flex h-[19px] shrink-0 items-center pl-px whitespace-nowrap">
        <div className="grid w-[80px] grid-cols-[28px_32px_auto] items-center justify-items-center">
          <span className="justify-self-end">フィル:</span>
          <span className="h-2 w-[27px] justify-self-end bg-black" />
          <span />
          <span className="justify-self-end">ストローク:</span>
          <span>なし</span>
          <span>2.54</span>
        </div>
        <label htmlFor="o" className="ml-[3px] w-2">O:</label>
        <SpinBox id="o" value="100" plusOff className="w-[39px]" />
        <span className="ml-2 h-[9px] w-[2px] bg-[#7ea6dc]" />
        <button type="button" className="ml-[3px] w-[30px] text-left">Layer 1</button>
        <button type="button" aria-label="表示切り替え" className="text-[#111]"><Eye className="size-[10px]" strokeWidth={3} /></button>
        <button type="button" aria-label="ロック切り替え" className="ml-[9px]"><Glyph name="unlock" className="block size-[10px]" /></button>
        <p className="ml-1 border-l border-[#e2dfdc] py-1 pl-1">
          ドラッグで円/弧を作成します。コントロールをドラッグして弧または扇形を作成、クリックで選択します。
        </p>
        <div className="ml-auto flex items-center pr-[6px]">
          <div className="grid grid-cols-[11px_26px] border-l border-[#e2dfdc] pl-1">
            <span>X:</span>
            <span>1061.54</span>
            <span>Y:</span>
            <span>1661.72</span>
          </div>
          <label htmlFor="z" className="w-[6px]">Z:</label>
          <SpinBox id="z" value="71%" className="w-[46px]" />
          <label htmlFor="r" className="ml-[5px] w-[6px]">R:</label>
          <SpinBox id="r" value="0.00°" className="w-[50px]" />
        </div>
      </footer>
    </div>
  );
}
